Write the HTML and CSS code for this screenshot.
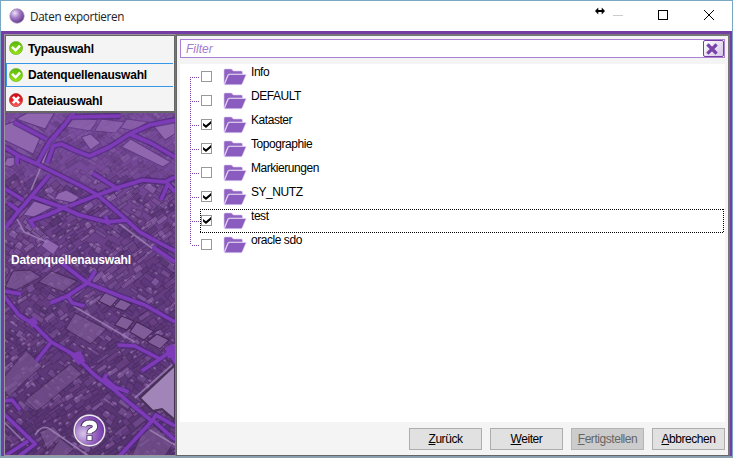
FILE: index.html
```html
<!DOCTYPE html>
<html lang="de">
<head>
<meta charset="utf-8">
<title>Daten exportieren</title>
<link rel="stylesheet" href="styles.css">
</head>
<body>
<svg class="defs" width="0" height="0">
  <defs>
    <radialGradient id="orb" cx=".35" cy=".3" r=".75"><stop offset="0" stop-color="#eee2fa"/><stop offset=".45" stop-color="#a47bc6"/><stop offset="1" stop-color="#5b3589"/></radialGradient>
    <radialGradient id="helpfill" cx=".3" cy=".6" r=".75"><stop offset="0" stop-color="#d9c6ea"/><stop offset=".5" stop-color="#9868c2"/><stop offset="1" stop-color="#6a2fa5"/></radialGradient>
    <linearGradient id="green" x2="0" y2="1"><stop offset="0" stop-color="#58b80d"/><stop offset="1" stop-color="#9be315"/></linearGradient>
    <linearGradient id="red" x2="0" y2="1"><stop offset="0" stop-color="#c90b17"/><stop offset=".6" stop-color="#f0242b"/><stop offset="1" stop-color="#ff6a62"/></linearGradient>
    <symbol id="ok" viewBox="0 0 14 14"><circle cx="7" cy="7" r="6.6" fill="url(#green)" stroke="#73b92d" stroke-width=".7"/><path d="M3 5.8 6.6 9.3 11 4.7" fill="none" stroke="#fff" stroke-width="2.5"/></symbol>
    <symbol id="bad" viewBox="0 0 14 14"><circle cx="7" cy="7" r="6.5" fill="url(#red)" stroke="#b5333a" stroke-width=".8"/><path d="M3.9 3.9 10.1 10.1M10.1 3.9 3.9 10.1" fill="none" stroke="#fff" stroke-width="2.6"/></symbol>
    <symbol id="folder" viewBox="0 0 24 18"><path d="M1 16V2.2Q1 1 2.2 1H8.6L10.3 3H18.2Q19.4 3 19.4 4.2V6H6.3Q5.2 6 4.7 7.1Z" fill="#8f62c4" stroke="#d9c9ec" stroke-width=".6"/><path d="M1.4 16.8 5.2 7.6Q5.6 6.5 6.8 6.5H23.2L19.4 15.6Q18.9 16.8 17.7 16.8Z" fill="#8a5cc0" stroke="#e2d6f0" stroke-width=".7"/></symbol>
  </defs>
</svg>
<div class="window">
  <header class="titlebar">
    <svg class="app-icon" viewBox="0 0 16 16"><circle cx="8" cy="8" r="7.2" fill="url(#orb)" stroke="#a08bb3" stroke-width=".7"/></svg>
    <span class="title">Daten exportieren</span>
    <svg class="controls" viewBox="0 0 144 30" fill="none" stroke="#000">
      <path d="M10 10H18" stroke-width="2"/><path d="M9 10 12.3 6.5V13.5ZM19 10 15.7 6.5V13.5Z" fill="#000" stroke="none"/>
      <path d="M27 14.5H37" stroke="#ccc"/><rect x="72.5" y="9.5" width="9" height="9"/><path d="M118 9 128 19M128 9 118 19"/>
    </svg>
  </header>
  <main class="frame">
    <aside class="sidebar">
      <nav class="steps">
        <div class="step"><svg><use href="#ok"/></svg>Typauswahl</div>
        <div class="step current"><svg><use href="#ok"/></svg>Datenquellenauswahl</div>
        <div class="step"><svg><use href="#bad"/></svg>Dateiauswahl</div>
      </nav>
      <div class="map">
        <svg class="aerial" viewBox="6 113 169 342" preserveAspectRatio="none">
          <defs><linearGradient id="ground" x2="0" y2="1"><stop offset="0" stop-color="#7d4fa2"/><stop offset=".4" stop-color="#684087"/><stop offset="1" stop-color="#53336c"/></linearGradient>
          <filter id="soft"><feGaussianBlur stdDeviation=".5"/></filter></defs>
          <rect x="5" y="112" width="171" height="345" fill="url(#ground)"/>
          <g filter="url(#soft)">
            <g id="blocks"></g>
            <g fill="#9066af" stroke="#5f3884" stroke-width="1">
              <path d="M28 113H55L46 129 17 119ZM5 125 14 122 41 138 34 154 5 140ZM131 139 171 162 163 167 122 147Z"/>
              <path d="M82 137 91 134 101 143 91 150ZM59 193 67 190 80 197 74 203 55 199ZM35 201 54 207 35 217 24 215Z"/>
              <path d="M47 238 60 246 54 255 42 246ZM8 158 16 157 21 162 11 167 5 165ZM153 125 175 118V134L165 140Z"/>
              <path d="M74 116 98 120 91 131 67 127ZM102 119 125 122 116 133 95 131ZM127 119 148 122 135 131 121 128Z" opacity=".7"/>
            </g>
            <g fill="#805c99" stroke="#432654" stroke-width="1">
              <path d="M106 292 119 298 111 307 99 301ZM121 299 132 304 125 311 114 307ZM137 322 154 331 144 340 130 332ZM157 334 169 340 160 349 147 342ZM122 316 134 321 127 330 115 325Z"/>
              <path d="M52 271 78 281 64 292 39 282ZM14 271 31 270 42 277 17 290 6 287ZM76 313 107 329 91 344 66 329Z" opacity=".65"/>
            </g>
            <path d="M175 365 140 398 153 411 162 409 175 420Z" fill="#a184b8" stroke="#463057" stroke-width="2"/>
            <path d="M5 377 27 350 43 366 25 382 10 397 5 390ZM26 400 71 364 83 374 38 411ZM40 432 54 426 62 435 48 450ZM61 438 75 449 67 456H49ZM142 433 155 426 173 444 165 456H132Z" fill="#795591" opacity=".65" stroke="#452b58"/>
            <g fill="none" stroke="#a386b9" stroke-width="1.7" opacity=".75"><path d="M72 112 48 151 40 171 32 190M74 306 135 342M119 223 174 265M18 219 25 232 48 242M172 365 135 398M36 435Q43 423 52 430L89 456M5 422 29 446M150 430 175 445"/></g>
            <g fill="none" stroke="#4d267a" stroke-width="6.4" opacity=".65"><use href="#roads"/></g>
            <g fill="none" stroke="#7d3ab8" stroke-width="3.6" stroke-linejoin="round">
              <g id="roads">
                <path d="M75 112 66 124 50 142 42 156 38 164M5 147 20 156 38 164 60 175 80 185 98 195 120 214 140 232 160 243 175 251"/>
                <path d="M15 122 47 139M48 163 54 146 62 144 77 151 90 156 110 147 130 134 150 125 175 120M130 134 151 143 175 157M72 117 121 116"/>
                <path d="M93 173 120 190M70 206 98 195 120 187 143 180 165 182 175 177M175 192 168 184 161 200M50 175 30 199 18 213 5 230M5 188 24 200M31 196 62 207 80 215 107 222 128 220M68 206 48 215 31 221 35 227M9 203 20 211M18 156 18 164M106 216 109 225"/>
                <path d="M153 247 175 262M62 263 88 283 96 271M88 283 120 296 145 305 175 322M51 303 68 296 88 283M68 296 73 303 85 306M5 291 22 294"/>
                <path d="M5 296 20 315 35 325 52 342 75 355 95 375 115 390 130 403 152 421M52 342 37 361M118 345 135 346 160 359 175 348M142 371 160 359M167 349 176 363M107 374 105 378 115 387 129 392"/>
                <path d="M5 401 13 400 21 410M5 414 36 444 20 456M6 456 29 441M120 456 153 420 156 415 175 426M154 421 175 440"/>
              </g>
            </g>
            <g fill="#7d3ab8"><path d="M70 354 81 351 86 361 79 365ZM165 348 172 344 175 346V358L168 358ZM28 320 35 317 39 323 33 328Z"/></g>
          </g>
        </svg>
        <div class="map-title">Datenquellenauswahl</div>
        <svg class="help" viewBox="0 0 32 32"><circle cx="16" cy="16" r="15" fill="url(#helpfill)" stroke="#6e577e" stroke-width="2"/><circle cx="16" cy="16" r="14.8" fill="none" stroke="#eee8ef" stroke-width="1.3"/><g fill="none" stroke="#453159" stroke-width="5.8"><path d="M10 12.3Q10.8 8.3 16 8.3 21.3 8.3 21.3 12 21.3 14.3 18 15.8 16 16.7 16 19.3"/><path d="M16 20.5V26"/></g><g fill="none" stroke="#fff" stroke-width="4.2"><path d="M10.5 12Q11.3 8.3 16 8.3 21.3 8.3 21.3 12 21.3 14.3 18 15.8 16 16.7 16 19"/><path d="M16 21.2V25.4"/></g></svg>
      </div>
    </aside>
    <section class="content">
      <div class="filter"><span>Filter</span><button class="clear" aria-label="Filter löschen"><svg viewBox="0 0 12 12"><path d="M2.5 2.5 9.5 9.5M9.5 2.5 2.5 9.5" stroke="#7842a8" stroke-width="3.2" stroke-linecap="square"/></svg></button></div>
      <div class="tree">
        <div class="row first"><i class="branch"></i><b class="check"></b><svg><use href="#folder"/></svg><span>Info</span></div>
        <div class="row"><i class="branch"></i><b class="check"></b><svg><use href="#folder"/></svg><span>DEFAULT</span></div>
        <div class="row"><i class="branch"></i><b class="check on"></b><svg><use href="#folder"/></svg><span>Kataster</span></div>
        <div class="row"><i class="branch"></i><b class="check on"></b><svg><use href="#folder"/></svg><span>Topographie</span></div>
        <div class="row"><i class="branch"></i><b class="check"></b><svg><use href="#folder"/></svg><span>Markierungen</span></div>
        <div class="row"><i class="branch"></i><b class="check on"></b><svg><use href="#folder"/></svg><span>SY_NUTZ</span></div>
        <div class="row focused"><i class="branch"></i><b class="check on"></b><svg><use href="#folder"/></svg><span>test</span></div>
        <div class="row last"><i class="branch"></i><b class="check"></b><svg><use href="#folder"/></svg><span>oracle sdo</span></div>
      </div>
      <footer class="buttons">
        <button><span><u>Z</u>urück</span></button><button><span><u>W</u>eiter</span></button><button disabled><span><u>F</u>ertigstellen</span></button><button><span><u>A</u>bbrechen</span></button>
      </footer>
    </section>
  </main>
</div>
<script src="map.js"></script>
</body>
</html>
```
FILE: styles.css
```css
* { box-sizing: border-box; }
body { margin: 0; overflow: hidden; font: 12px/14px "Liberation Sans", Arial, sans-serif; color: #000; }
.defs { position: absolute; }
.window { width: 733px; height: 458px; display: flex; flex-direction: column; border: 1px solid #79a8c5; border-bottom: 2px solid #8a9fb0; background: #fff; }
.titlebar { height: 30px; flex: none; display: flex; align-items: center; padding-left: 8px; }
.app-icon { width: 16px; height: 16px; margin-top: -1px; }
.title { font: 11.7px/16px "Open Sans", "Noto Sans", sans-serif; letter-spacing: -.33px; margin-left: 5px; margin-top: -1px; color: #222; }
.controls { width: 144px; height: 30px; margin-left: auto; margin-right: 2px; }
.frame { flex: 1; min-height: 0; display: flex; background: #763ea5; padding: 3px 2px 0 3px; }
.sidebar { width: 172px; border: 1px solid #9b969e; border-right-color: #777; display: flex; flex-direction: column; }
.steps { height: 78px; flex: none; background: #f4f4f4; border: 1px solid #666; border-bottom-width: 2px; }
.step { height: 25px; display: flex; align-items: center; padding-left: 3px; font: bold 12px/14px "Liberation Sans", Arial, sans-serif; letter-spacing: -.2px; }
.step svg { width: 14px; height: 14px; margin-right: 5px; margin-top: -1px; }
.step.current { height: 24px; margin: 2px 1px 1px 0; border: 1px solid #3697e8; border-right: 0; padding-left: 2px; }
.map { flex: 1; position: relative; overflow: hidden; }
.aerial { display: block; width: 100%; height: 100%; }
.map-title { position: absolute; left: 6px; top: 140px; color: #fff; font: bold 12px/14px "Liberation Sans", Arial, sans-serif; letter-spacing: -.15px; }
.help { position: absolute; left: 68px; top: 301px; width: 33px; height: 33px; }
.content { flex: 1; min-width: 0; background: #f4f4f4; border: 1px solid #666; border-top: 2px solid #777; border-right: 2px solid #777; padding: 3px 3px 4px; display: flex; flex-direction: column; }
.filter { height: 19px; flex: none; background: #fff; border: 1px solid #ab82d3; display: flex; align-items: center; color: #a57bcc; font-style: italic; padding-left: 5px; }
.clear { width: 21px; height: 17px; margin-left: auto; padding: 1px 0 0 2px; border: 1px solid #763ea5; border-radius: 2px; background: linear-gradient(135deg, #fff, #d6c5e7); }
.clear svg { display: block; width: 12px; height: 12px; }
.tree { height: 358px; flex: none; margin-top: 6px; background: #fff; padding: 1px 0 0 10px; }
.row { height: 24px; display: flex; position: relative; }
.row::before { content: ""; width: 1px; height: 24px; background: repeating-linear-gradient(#763ea5 0 1px, transparent 1px 2px); }
.row.first::before { height: 12px; margin-top: 12px; }
.row.last::before { height: 12px; }
.branch { width: 9px; height: 1px; margin-top: 12px; background: repeating-linear-gradient(90deg, transparent 0 1px, #763ea5 1px 2px); }
.check { width: 11px; height: 11px; margin: 6px 0 0 1px; border: 1px solid #999; background: #fff; position: relative; }
.check.on::after { content: ""; position: absolute; left: 1px; top: 1px; width: 8px; height: 7px; background: #000; clip-path: polygon(0 29%, 37% 62%, 100% 0, 100% 38%, 37% 100%, 0 65%); }
.row svg { width: 24px; height: 18px; margin: 3px 0 0 11px; }
.row span { margin: 0 0 0 4px; letter-spacing: -.45px; }
.row.focused::after { content: ""; position: absolute; left: 10px; right: 1px; top: 0; bottom: 0; background: repeating-linear-gradient(90deg, #000 0 1px, transparent 1px 2px) top/100% 1px no-repeat, repeating-linear-gradient(90deg, #000 0 1px, transparent 1px 2px) bottom/100% 1px no-repeat, repeating-linear-gradient(#000 0 1px, transparent 1px 2px) left/1px 100% no-repeat, repeating-linear-gradient(#000 0 1px, transparent 1px 2px) right/1px 100% no-repeat; }
.buttons { margin-top: 6px; display: flex; justify-content: flex-end; gap: 8px; }
.buttons button { width: 73px; height: 22px; padding: 0; border: 1px solid #adadad; background: #e1e1e1; font: 12px/14px "Liberation Sans", Arial, sans-serif; letter-spacing: -.45px; color: #000; }
.buttons button:disabled { background: #ccc; border-color: #b5b5b5; color: #666; }
.buttons u { text-underline-offset: 1px; }
```
FILE: map.js
```js
// Fills the aerial map with roofs and gardens along two street directions.
let seed = 71;
const rnd = () => (seed = (seed * 16807) % 2147483647) / 2147483647;
const tones = ['#7d549a', '#6b4285', '#59367a', '#755094', '#8963a6', '#553571', '#61397d'];
let out = '';
for (let y = 109; y < 460; y += 8) {
  for (let x = 0; x < 179; x += 8) {
    const w = 5 + rnd() * 10, h = 2.5 + rnd() * 5;
    const px = x + rnd() * 5, py = y + rnd() * 5;
    const angle = (x + y) % 88 < 60 ? -38 + rnd() * 5 : 32 + rnd() * 5;
    const tone = tones[Math.floor(rnd() * tones.length)];
    out += `<rect x="${px}" y="${py}" width="${w}" height="${h}" fill="${tone}" stroke="#432654" stroke-width=".7" opacity="${y < 175 ? .3 : .65}" transform="rotate(${angle} ${px} ${py})"/>`;
    if (rnd() < .45) {
      out += `<rect x="${px + 2}" y="${py}" width="3" height="2" fill="#9c7cb3" opacity="${y < 175 ? .25 : .6}" transform="rotate(${angle} ${px} ${py})"/>`;
    }
  }
}
document.getElementById('blocks').innerHTML = out;
```
